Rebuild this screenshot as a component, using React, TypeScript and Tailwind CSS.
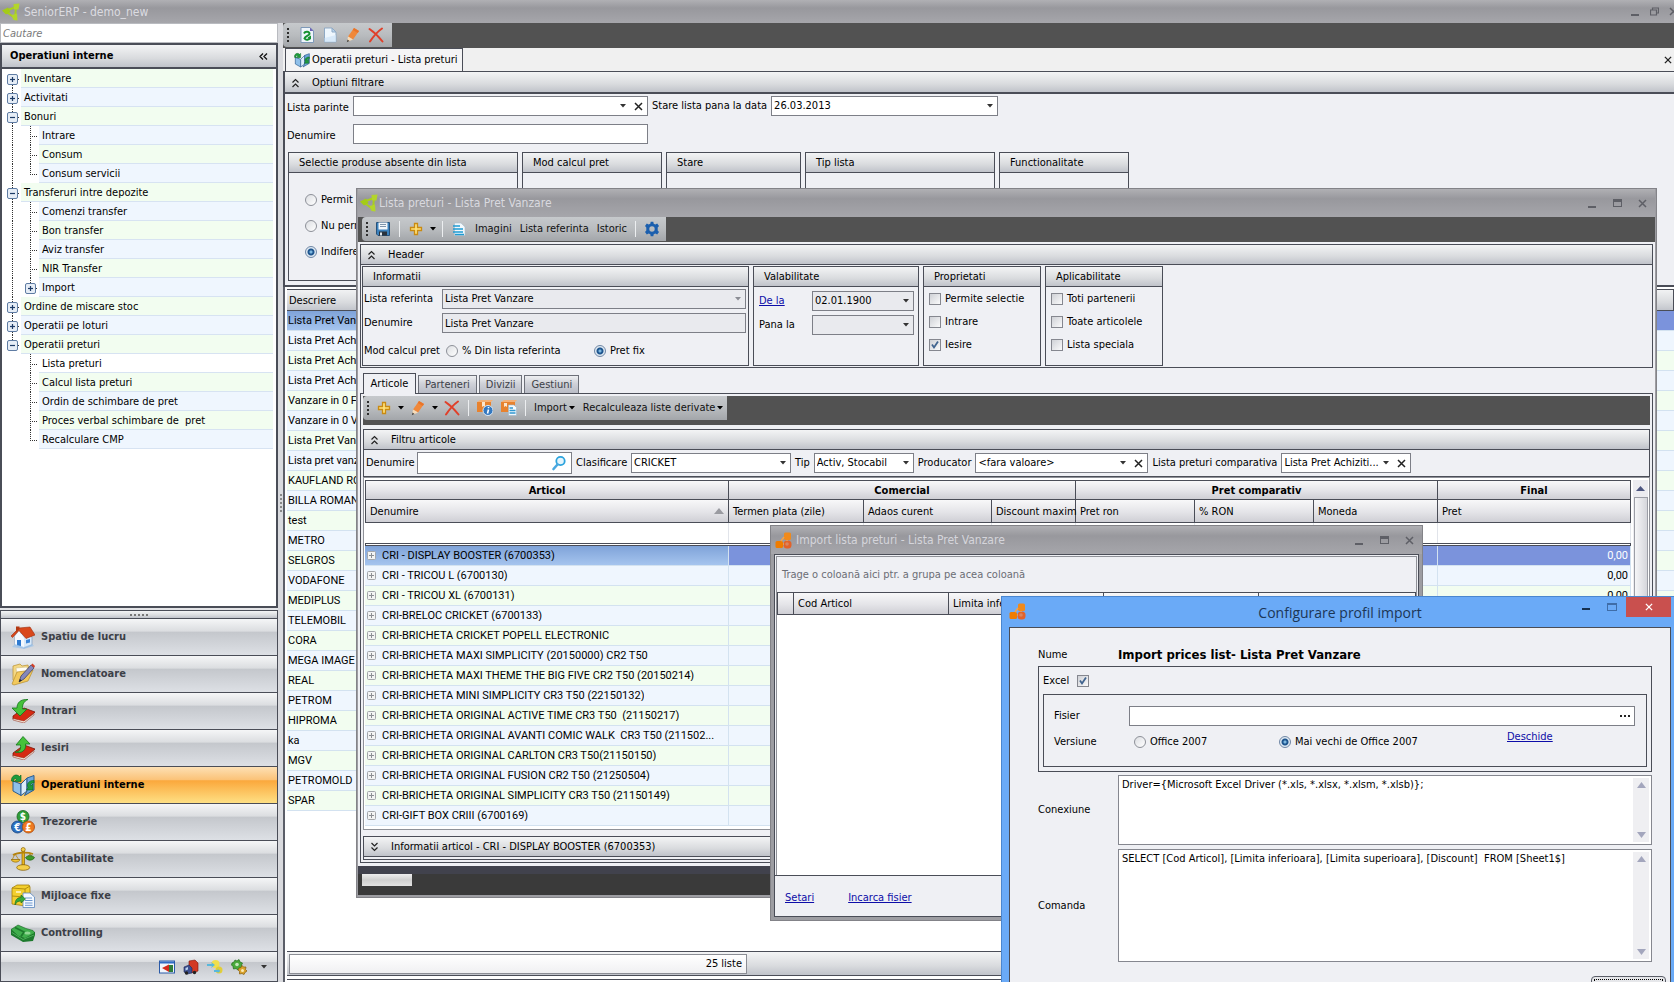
import React, { useId } from "react";

const EDGE = "border-[#4a4d57]";
const BAR = "bg-[linear-gradient(#f3f4f5,#d9dbde_60%,#c0c3ca)]";
const TOOL = "bg-[linear-gradient(#c6c9cc,#b9bcbf_50%,#a3a6aa)]";
const TITLE = "bg-[linear-gradient(#b0b0b4,#98989d_35%,#a6a6ab)]";

/* ---------- icons ---------- */

type P = { className?: string };

const Svg = ({ s = 16, children, className = "" }: { s?: number; children: React.ReactNode; className?: string }) => (
  <svg width={s} height={s} viewBox={`0 0 ${s} ${s}`} className={`shrink-0 ${className}`} aria-hidden="true">
    {children}
  </svg>
);

const SeniorLogo = () => (
  <svg width="18" height="18" viewBox="0 0 18 18" className="shrink-0" aria-hidden="true">
    <path d="M3 8 14 4M14 4 13 15M3 8 13 15" stroke="#a9cf1e" strokeWidth="2" fill="none" />
    <path d="M0 7.500 6 4.500 8.500 9 4 11.500Z" fill="#a4cc17" />
    <path d="M11.500 1 17.500 .5 16.500 6.500 12 6.500Z" fill="#b3d52a" />
    <path d="M9.500 12 15 10.500 15.500 17.500 11.500 17Z" fill="#b3d52a" />
  </svg>
);

const CubesLogo = () => (
  <svg width="17" height="17" viewBox="0 0 17 17" className="shrink-0" aria-hidden="true">
    <rect x="0.500" y="9" width="7.500" height="7" rx="1.500" fill="#ef7c00" />
    <rect x="9" y="0.500" width="7" height="7.500" rx="1.500" fill="#f08a1c" />
    <rect x="8.500" y="8.500" width="8" height="8" rx="3.500" fill="#e2622a" />
    <path d="M9 5 6 9M12 8V9M8 12H9" stroke="#f2a24d" strokeWidth="1.500" />
    <circle cx="12" cy="12" r="1.800" fill="#d98660" />
  </svg>
);

const RefreshDoc = () => (
  <Svg>
    <path d="M2 .5H11L14.500 4V15.500H2Z" fill="#eef5fb" stroke="#7e99b8" />
    <path d="M11 .5V4H14.500Z" fill="#6b62b5" />
    <path d="M5 6.500C6 4.200 10.500 4.200 10.500 7 10.500 8.500 6 9 5.500 11.500 7 13.500 10 13 11 11" stroke="#149130" strokeWidth="2" fill="none" />
    <path d="M12 8.500V12.500L8.500 10.500Z" fill="#149130" />
  </Svg>
);
const NewDoc = () => (
  <Svg>
    <path d="M2.500 1H10L14 5V15H2.500Z" fill="#eef6fd" stroke="#8fa9c4" />
    <path d="M10 1V5H14Z" fill="#b9d5ef" stroke="#8fa9c4" />
    <path d="M2.500 15V11L14 8V15Z" fill="#cfe4f7" opacity=".7" />
  </Svg>
);
const Pencil = () => (
  <Svg>
    <path d="M9 1 14 4 8 12.500 3 9.500Z" fill="#f0883a" />
    <path d="M9 1 14 4 12.800 6 7.800 3Z" fill="#e9742a" />
    <path d="M3 9.500 8 12.500 2 15Z" fill="#f8dcb8" />
    <path d="M2.500 12.500 4.500 14 1.800 15.200Z" fill="#444" />
  </Svg>
);
const RedX = () => (
  <Svg>
    <path d="M1.500 2C6 5 11 10 14.500 14.500M14 1.500C9 5 5 10 2 14.500" stroke="#e0402a" strokeWidth="2" fill="none" strokeLinecap="round" />
  </Svg>
);
const Save = () => (
  <Svg>
    <path d="M1.500 1.500H14.500V14.500H3L1.500 13Z" fill="#3c82bd" stroke="#28527a" />
    <rect x="3.500" y="1.500" width="9" height="7" fill="#f4f8fb" />
    <path d="M5 3.500H11M5 5.500H11" stroke="#7f95ab" />
    <rect x="4" y="10.500" width="8" height="4" fill="#2a333d" />
    <rect x="5" y="11.500" width="2" height="3" fill="#dfe7ee" />
  </Svg>
);
const Plus = () => (
  <Svg>
    <path d="M6.500 2.500H9.500V6.500H13.500V9.500H9.500V13.500H6.500V9.500H2.500V6.500H6.500Z" fill="#ffe27a" stroke="#c98a12" strokeWidth="1.300" />
  </Svg>
);
const LinesDoc = () => (
  <Svg>
    <path d="M3.500 2H10L14 6V14.500H3.500Z" fill="#f2f8fc" stroke="#a9bccb" strokeWidth=".6" />
    <path d="M2 5H9M2 8H12M2 11H12M4 13.500H13" stroke="#1f9bd2" strokeWidth="1.600" />
  </Svg>
);
const Gear = () => (
  <Svg>
    <path
      fillRule="evenodd"
      fill="#1b5fae"
      d="M6.700.8H9.300L9.700 2.800 11.300 3.500 13.200 2.600 15 4.900 13.700 6.400V8 9.600L15 11.100 13.200 13.400 11.300 12.500 9.700 13.200 9.300 15.200H6.700L6.300 13.200 4.700 12.500 2.800 13.400 1 11.100 2.300 9.600V6.400L1 4.900 2.800 2.600 4.700 3.500 6.300 2.800ZM8 5.300A2.700 2.700 0 1 0 8 10.700 2.700 2.700 0 1 0 8 5.300Z"
    />
  </Svg>
);
const Magnifier = () => (
  <Svg>
    <circle cx="9.500" cy="6" r="4.200" fill="#e4f4fc" stroke="#2ba3dd" strokeWidth="1.800" />
    <path d="M6.500 9.500 2.500 14" stroke="#4aa8e0" strokeWidth="2.600" strokeLinecap="round" />
  </Svg>
);
const BoxInfo = () => (
  <Svg>
    <path d="M0 2H14V12H0Z" fill="#e8822e" />
    <path d="M0 2 3 0H16L14 2Z" fill="#f3b178" />
    <path d="M5 2H8V7L6.500 6 5 7Z" fill="#fbe6cf" />
    <circle cx="11" cy="10.500" r="5" fill="#3478c0" stroke="#dce9f5" />
    <path d="M11.500 7V8.300M11.500 9.500 10.500 13.500" stroke="#fff" strokeWidth="1.600" />
  </Svg>
);
const BoxDoc = () => (
  <Svg>
    <path d="M0 2H14V12H0Z" fill="#e8822e" />
    <path d="M0 2 3 0H16L14 2Z" fill="#f3b178" />
    <path d="M3 3H6V7L4.500 6 3 7Z" fill="#fbe6cf" />
    <path d="M7.500 5H13L15.500 7.500V15.500H7.500Z" fill="#f4f9fd" stroke="#9bb3c8" strokeWidth=".6" />
    <path d="M8.500 8H12M8.500 10.500H14.500M8.500 13H14.500" stroke="#2f97d0" strokeWidth="1.300" />
  </Svg>
);

const MapIcon = ({ s = 24 }: { s?: number }) => (
  <svg width={s} height={s} viewBox="0 0 24 24" className="shrink-0" aria-hidden="true">
    <path d="M2 8 10 11V22.500L2 18Z" fill="#8fc0ea" stroke="#2c5d8f" />
    <path d="M10 11 16 5V18L10 22.500Z" fill="#dcecfa" stroke="#2c5d8f" />
    <path d="M16 5 23 2.500V17L13.500 22.500 16 18Z" fill="#6fa7dc" stroke="#2c5d8f" />
    <path d="M.5 8C0 3 5 0 8.500 3.500L10 2V8.500H3.500L5.500 6.500C4 5 2.500 6 3 8.500Z" fill="#1f9b3b" stroke="#0c6323" strokeWidth=".6" />
    <path d="M23 7.500C18.500 7 15 11 17 14.500L15.500 17H22V11L19.800 13C19 11.500 20.500 9.500 23 10Z" fill="#1f9b3b" stroke="#0c6323" strokeWidth=".6" />
  </svg>
);
const House = () => (
  <Svg s={24}>
    <path d="M4 11 13 7 21 12V20L13 23 4 20Z" fill="#d7e8f8" stroke="#7d9cc0" strokeWidth=".7" />
    <path d="M4 11 8 6 13 13V23L4 20Z" fill="#f4f9fe" />
    <path d="M6 15H10V21.500L6 20.500Z" fill="#2e7ad0" />
    <path d="M15 15 19 14V17.500L15 18.500Z" fill="#3d86d8" />
    <path d="M0 11 8 3 19 2 24 10 15 13.500 8 5.500 1.500 12.500Z" fill="#d9481c" stroke="#9c2d0d" strokeWidth=".6" />
    <path d="M5 1.500H8.500V4L5 7Z" fill="#b23812" />
    <path d="M1 22 4 19 13 22 21 19 23 21 13 24Z" fill="#9ac2ea" opacity=".7" />
  </Svg>
);
const FolderPen = () => (
  <Svg s={24}>
    <path d="M2 4 9 2 11 4 17 3 18 8 6 21 2 18Z" fill="#f4d884" stroke="#b98f2c" strokeWidth=".7" />
    <path d="M5 6 16 5 17 12 7 19Z" fill="#fffdf5" stroke="#c8b67e" strokeWidth=".5" />
    <path d="M1 22 6 10 22 8 17 19 3 23Z" fill="#f2c95c" stroke="#b98f2c" strokeWidth=".7" />
    <path d="M8 20 10 14 20 3 23 6 13 17Z" fill="#8488bb" stroke="#33365f" strokeWidth=".7" />
    <path d="M20 3 21.500 1.500 24 4 23 6Z" fill="#d33f25" />
    <path d="M8 20 8.800 17 11 18.500Z" fill="#222" />
  </Svg>
);
const BookIn = () => (
  <Svg s={24}>
    <path d="M2 17 13 9 24 13 13 23 2 20Z" fill="#d62a12" stroke="#7c1408" strokeWidth=".8" />
    <path d="M2 19.500 13 22 23 14.500V16L13 24 2 21Z" fill="#f5e9dd" stroke="#8c2415" strokeWidth=".5" />
    <path d="M17 .5C9 0 6 4 6 9H1L9 17 16 10H11.500C11 6 13 2 17 .5Z" fill="#46c23a" stroke="#13761a" strokeWidth=".8" />
  </Svg>
);
const BookOut = () => (
  <Svg s={24}>
    <path d="M2 17 13 9 24 13 13 23 2 20Z" fill="#d62a12" stroke="#7c1408" strokeWidth=".8" />
    <path d="M2 19.500 13 22 23 14.500V16L13 24 2 21Z" fill="#f5e9dd" stroke="#8c2415" strokeWidth=".5" />
    <path d="M4 16C9 16 10 13 9.500 9H5L12 .5 19 8H14.500C15.500 14 11 18 4 16Z" fill="#46c23a" stroke="#13761a" strokeWidth=".8" />
  </Svg>
);
const Coin = ({ x, y, c, d, children }: { x: number; y: number; c: string; d: string; children: string }) => (
  <g>
    <circle cx={x} cy={y} r="6" fill={c} stroke={d} strokeWidth=".8" />
    <text x={x} y={y + 3.5} textAnchor="middle" fontSize="10" fontWeight="bold" fill="#fff">
      {children}
    </text>
  </g>
);
const Coins = () => (
  <Svg s={24}>
    <Coin x={12} y={6.5} c="#2f9d38" d="#166320">$</Coin>
    <Coin x={6.5} y={17} c="#2c6fc0" d="#14417c">€</Coin>
    <Coin x={17.5} y={17} c="#ee7a22" d="#a94a0a">£</Coin>
  </Svg>
);
const Scales = () => (
  <Svg s={24}>
    <path d="M11 3H13.500V18H11Z" fill="#e8b51d" stroke="#8d6507" strokeWidth=".7" />
    <circle cx="12.200" cy="2.500" r="2" fill="#f4cf4a" stroke="#8d6507" strokeWidth=".7" />
    <path d="M2 8C7 5 17 5 22 7" stroke="#b5830d" strokeWidth="1.800" fill="none" />
    <path d="M4 7 1 13H8ZM19 7 15.500 11H22.500Z" fill="none" stroke="#b5830d" strokeWidth=".8" />
    <path d="M0 12.500H9C8 16 1.500 16 0 12.500Z" fill="#f0c232" stroke="#8d6507" strokeWidth=".7" />
    <path d="M14.500 10.500C17 8 21 8 23.500 10.500 22 14 16 14 14.500 10.500Z" fill="#3f9a2b" stroke="#1e6310" strokeWidth=".7" />
    <ellipse cx="12.200" cy="20.500" rx="6.500" ry="2.800" fill="#f4cf4a" stroke="#8d6507" strokeWidth=".8" />
  </Svg>
);
const Cabinet = () => (
  <Svg s={24}>
    <path d="M1 4 6 1H18L19 3V19L15 22 1 20Z" fill="#f3cf2e" stroke="#a37f07" strokeWidth=".8" />
    <path d="M1 4 14 5 19 2M14 5V21M1 12 14 13" stroke="#a37f07" strokeWidth=".8" fill="none" />
    <path d="M5 8H10M5 16H9" stroke="#fff8cf" strokeWidth="1.500" />
    <path d="M12 9H19L23.500 13V23.500H12Z" fill="#f4f9ff" stroke="#5a86bd" strokeWidth=".8" />
    <path d="M14 14H21M14 16.500H21.500M14 19H21.500M14 21.300H21.500" stroke="#6b97cf" />
    <path d="M4 21C4 15 7 13.500 10 13.500V11L14.500 15 10 19V17C7 17 5.500 18 4 21Z" fill="#36a83a" stroke="#136a1a" strokeWidth=".6" />
  </Svg>
);
const Cash = () => (
  <Svg s={24}>
    <path d="M0 8.500V14L12 21 22 20 24 14V11Z" fill="#1d7a2d" />
    <path d="M0 8.500 7 4 15 7.500 22 9.500 24 12 14 17.500 7 15Z" fill="#3fae4c" stroke="#176424" strokeWidth=".6" />
    <path d="M4 6.500 13 11 10 15.500" stroke="#1d7a2d" strokeWidth="1.800" fill="none" />
    <ellipse cx="16.500" cy="12" rx="3" ry="1.600" fill="#8fd793" />
    <path d="M1 11.500 12 18.500 23 14" stroke="#57bd62" strokeWidth=".8" fill="none" />
  </Svg>
);

const MiniWindow = () => (
  <Svg>
    <rect x=".5" y="2" width="15" height="12" fill="#f1f5fb" stroke="#2a5aa8" />
    <rect x="1" y="2.500" width="14" height="2" fill="#2f6bc4" />
    <path d="M3 9 10 5.500V13Z" fill="#d42a1b" />
    <rect x="10" y="6" width="4" height="7" fill="#2f7c3a" />
  </Svg>
);
const MiniTruck = () => (
  <Svg>
    <path d="M6 2 12 1 15 4V12L10 14 6 11Z" fill="#d23a24" stroke="#7d160b" strokeWidth=".6" />
    <path d="M1 8 6 6 9 9V14L4 15 1 13Z" fill="#3d4f8f" stroke="#1d2750" strokeWidth=".6" />
    <circle cx="3.500" cy="14" r="1.700" fill="#222" />
    <circle cx="11.500" cy="13.500" r="1.700" fill="#222" />
    <path d="M2.500 9 5 8V10.500L2.500 11.500Z" fill="#bcd3f0" />
  </Svg>
);
const MiniCubes = () => (
  <Svg>
    <circle cx="8.500" cy="5" r="4" fill="#f0df4e" />
    <circle cx="12" cy="11" r="3.500" fill="#e3cf37" />
    <path d="M0 5H5L4 3 8 6 4 9 5 7H0Z" fill="#58b8dc" />
    <path d="M7 11H11L10 9.500 13.500 12 10 14.500 11 13H7Z" fill="#58b8dc" />
  </Svg>
);
const MiniGears = () => (
  <Svg>
    <path d="M1 4 3 3 4 1 6 2 8 .5 9 3 11.500 4 10.500 6 11 8.500 8.500 9 7 11 5 9.500 2.500 10 2 7.500 .5 6Z" fill="#49a93b" stroke="#1f6d18" strokeWidth=".7" />
    <circle cx="6" cy="5.500" r="1.800" fill="#c4e6bd" />
    <path d="M8 9 10 8.500 11 6.500 12.500 8 15 8 14.500 10.500 16 12 14 13.500 13 15.500 11 14.500 8.500 15 8.500 12.500 7 11Z" fill="#d9a22c" stroke="#855b0b" strokeWidth=".7" />
    <circle cx="11.500" cy="11.500" r="1.500" fill="#fbe9b5" />
  </Svg>
);

const Caret = ({ className = "text-[#333]" }: P) => (
  <svg width="6" height="4" viewBox="0 0 6 4" className={`pointer-events-none shrink-0 ${className}`} aria-hidden="true">
    <path d="M0 0H6L3 3.500Z" fill="currentColor" />
  </svg>
);
const Cross = ({ className = "", s = 9 }: P & { s?: number }) => (
  <svg width={s} height={s} viewBox="0 0 9 9" className={className} aria-hidden="true">
    <path d="M1 1 8 8M8 1 1 8" stroke="currentColor" strokeWidth="1.500" />
  </svg>
);
const Chevrons = ({ down = false }: { down?: boolean }) => (
  <svg width="9" height="10" viewBox="0 0 9 10" className="shrink-0" aria-hidden="true">
    <path
      d={down ? "M1.500 1 4.500 4 7.500 1M1.500 5.500 4.500 8.500 7.500 5.500" : "M1.500 4.500 4.500 1.500 7.500 4.500M1.500 9 4.500 6 7.500 9"}
      fill="none"
      stroke="#222"
      strokeWidth="1.200"
    />
  </svg>
);
const Grip = () => (
  <svg width="3" height="16" viewBox="0 0 3 16" className="ml-1 shrink-0" aria-hidden="true">
    <path d="M1 1V16" stroke="#2d2d2d" strokeWidth="2" strokeDasharray="2 2" />
  </svg>
);
const Divider = () => <span className="mx-0.5 h-4 w-px shrink-0 bg-[#eceef0]" />;

/* ---------- controls ---------- */

const IconButton = ({ label, children }: { label: string; children: React.ReactNode }) => (
  <button aria-label={label} className="grid size-5 shrink-0 place-items-center">
    {children}
  </button>
);

function Combo({
  id,
  label,
  value = "",
  clearable = false,
  disabled = false,
  dim = false,
  className = "",
}: {
  id?: string;
  label?: string;
  value?: string;
  clearable?: boolean;
  disabled?: boolean;
  dim?: boolean;
  className?: string;
}) {
  return (
    <div className={`flex h-5 items-center border border-[#7d7f87] pr-1 ${disabled ? "bg-[#e9eaee]" : "bg-white"} ${className}`}>
      <select id={id} aria-label={label} className="h-full min-w-0 flex-1 appearance-none truncate bg-transparent pl-0.5 outline-none">
        <option>{value}</option>
      </select>
      <Caret className={dim ? "text-[#8b8d94]" : "text-[#333]"} />
      {clearable && (
        <button aria-label="Sterge" className="ml-2 text-[#222]">
          <Cross />
        </button>
      )}
    </div>
  );
}

function Check({ label, checked = false, reverse = false }: { label: string; checked?: boolean; reverse?: boolean }) {
  return (
    <label className={`flex items-center ${reverse ? "flex-row-reverse justify-end gap-2" : "gap-1"}`}>
      <span className="grid size-3 shrink-0">
        <input
          type="checkbox"
          defaultChecked={checked}
          className="peer col-start-1 row-start-1 size-3 appearance-none border border-[#85878f] bg-[linear-gradient(135deg,#cfd1d6,#fafafb)]"
        />
        <svg viewBox="0 0 12 12" className="pointer-events-none invisible col-start-1 row-start-1 size-3 peer-checked:visible" aria-hidden="true">
          <path d="M3 5.500 5 8.500 9 2.500" fill="none" stroke="#41648f" strokeWidth="1.800" />
        </svg>
      </span>
      {label}
    </label>
  );
}

function Radio({ name, label, checked = false, className = "" }: { name: string; label: string; checked?: boolean; className?: string }) {
  return (
    <label className={`flex items-center gap-1 whitespace-nowrap ${className}`}>
      <input
        type="radio"
        name={name}
        defaultChecked={checked}
        className="size-3 shrink-0 appearance-none rounded-full border border-[#8d9098] bg-[linear-gradient(135deg,#dcdee2,#ffffff)] checked:border-[#6f87a5] checked:bg-[radial-gradient(circle_at_50%_50%,#7db8e0_0_1px,#1f568f_2px_3px,#dfe9f2_4px)]"
      />
      {label}
    </label>
  );
}

function GroupBox({ title, className = "", children }: { title: string; className?: string; children?: React.ReactNode }) {
  return (
    <section className={`flex flex-col border ${EDGE} ${className}`}>
      <h3 className={`flex h-5 shrink-0 items-center border-b pl-2.5 whitespace-nowrap ${EDGE} ${BAR}`}>{title}</h3>
      {children}
    </section>
  );
}

function Fold({ title, down = false, className = "" }: { title: string; down?: boolean; className?: string }) {
  return (
    <h2 className={`${EDGE} ${BAR} ${className}`}>
      <button aria-expanded={!down} className="flex h-full w-full items-center gap-3 pl-1.5 text-left">
        <Chevrons down={down} />
        {title}
      </button>
    </h2>
  );
}

function WindowButtons() {
  return (
    <div className="flex shrink-0 gap-4 text-[#5e5f66]">
      <button aria-label="Minimizare" className="grid size-[9px] items-end">
        <span className="h-0.5 w-2 bg-current" />
      </button>
      <button aria-label="Maximizare" className="h-2 w-[9px] border border-t-[3px] border-current" />
      <button aria-label="Inchidere">
        <Cross />
      </button>
    </div>
  );
}

/* ---------- side bar ---------- */

type Node = { t: string; lvl: 0 | 1; box?: "+" | "-"; last?: boolean };

const tree: Node[] = [
  { t: "Inventare", lvl: 0, box: "+" },
  { t: "Activitati", lvl: 0, box: "+" },
  { t: "Bonuri", lvl: 0, box: "-" },
  { t: "Intrare", lvl: 1 },
  { t: "Consum", lvl: 1 },
  { t: "Consum servicii", lvl: 1, last: true },
  { t: "Transferuri intre depozite", lvl: 0, box: "-" },
  { t: "Comenzi transfer", lvl: 1 },
  { t: "Bon transfer", lvl: 1 },
  { t: "Aviz transfer", lvl: 1 },
  { t: "NIR Transfer", lvl: 1 },
  { t: "Import", lvl: 1, box: "+", last: true },
  { t: "Ordine de miscare stoc", lvl: 0, box: "+" },
  { t: "Operatii pe loturi", lvl: 0, box: "+" },
  { t: "Operatii preturi", lvl: 0, box: "-" },
  { t: "Lista preturi", lvl: 1 },
  { t: "Calcul lista preturi", lvl: 1 },
  { t: "Ordin de schimbare de pret", lvl: 1 },
  { t: "Proces verbal schimbare de  pret", lvl: 1 },
  { t: "Recalculare CMP", lvl: 1, last: true },
];

function Branch({ node, first, trunk, trunkEnd }: { node: Node; first: boolean; trunk: boolean; trunkEnd: boolean }) {
  const w = node.lvl ? 37 : 19;
  const x = node.lvl ? 28 : 10;
  return (
    <svg width={w} height="19" viewBox={`0 0 ${w} 19`} className="shrink-0" aria-hidden="true">
      <g stroke="#333" strokeDasharray="1 1">
        {trunk && <path d={`M10.500 ${first ? 10 : 0}V${trunkEnd ? 10 : 19}`} />}
        {node.lvl === 1 && <path d={`M28.500 0V${node.last ? 10 : 19}`} />}
        <path d={`M${x} 10.500H${w - 1}`} />
      </g>
      {node.box && (
        <g>
          <rect x={x - 4.5} y="5.500" width="10" height="10" rx="1.500" fill="#e6edf6" stroke="#5f7ca3" />
          <path d={`M${x - 2} 10.500H${x + 3}`} stroke="#1d3b66" strokeWidth="1.200" />
          {node.box === "+" && <path d={`M${x + 0.5} 8V13`} stroke="#1d3b66" strokeWidth="1.200" />}
        </g>
      )}
    </svg>
  );
}

const modules: { t: string; icon: React.ReactNode; on?: boolean }[] = [
  { t: "Spatiu de lucru", icon: <House /> },
  { t: "Nomenclatoare", icon: <FolderPen /> },
  { t: "Intrari", icon: <BookIn /> },
  { t: "Iesiri", icon: <BookOut /> },
  { t: "Operatiuni interne", icon: <MapIcon />, on: true },
  { t: "Trezorerie", icon: <Coins /> },
  { t: "Contabilitate", icon: <Scales /> },
  { t: "Mijloace fixe", icon: <Cabinet /> },
  { t: "Controlling", icon: <Cash /> },
];

function Sidebar() {
  return (
    <aside className="flex w-[278px] shrink-0 flex-col bg-[#e3e4e7]">
      <input aria-label="Cautare" placeholder="Cautare" className="h-5 shrink-0 border border-[#b9bbc0] bg-white px-0.5 italic outline-none placeholder:text-[#7a7a7a]" />
      <div className={`flex h-[25px] shrink-0 items-center justify-between border-2 border-b px-2 font-bold ${EDGE} ${BAR}`}>
        Operatiuni interne
        <button aria-label="Restrange">
          <svg width="9" height="7" viewBox="0 0 9 7" aria-hidden="true">
            <path d="M4 .5 1 3.500 4 6.500M8 .5 5 3.500 8 6.500" fill="none" stroke="#111" strokeWidth="1.300" />
          </svg>
        </button>
      </div>
      <ul className={`min-h-0 flex-1 overflow-hidden border-2 border-t bg-white ${EDGE}`}>
        {tree.map((n, i) => (
          <li key={n.t + i} className="flex h-[19px] pr-[3px]">
            <Branch node={n} first={i === 0} trunk={i < 15} trunkEnd={i === 14} />
            <a
              href="#"
              className={`flex flex-1 items-center border-b border-[#d7e3f2] pt-0.5 pl-[3px] whitespace-pre ${
                i === 15 ? "bg-white" : i % 2 ? "bg-[#eff6fe]" : "bg-[#f2fdf0]"
              }`}
            >
              {n.t}
            </a>
          </li>
        ))}
      </ul>
      <div className={`mt-0.5 grid h-2 shrink-0 place-items-center border-x border-t ${EDGE} ${BAR}`}>
        <span className="w-[18px] border-t-2 border-dotted border-[#777]" />
      </div>
      <nav className="flex shrink-0 flex-col">
        {modules.map((m) => (
          <button
            key={m.t}
            className={`flex h-[37px] items-center gap-1.5 border border-b-0 pl-2.5 font-bold ${EDGE} ${
              m.on
                ? "bg-[linear-gradient(#fde0b4,#fbc277_36%,#fba83c_38%,#fee084)] text-black"
                : "bg-[linear-gradient(#f5f6f7,#dbdde0_34%,#c4c7cc_36%,#dde0e5)] text-[#3c3f47]"
            }`}
          >
            {m.icon}
            {m.t}
          </button>
        ))}
        <div className={`flex h-[31px] items-center justify-end gap-1 border pr-2.5 ${EDGE} bg-[linear-gradient(#f5f6f7,#dbdde0_34%,#c4c7cc_36%,#dde0e5)]`}>
          <IconButton label="Ferestre"><MiniWindow /></IconButton>
          <IconButton label="Transport"><MiniTruck /></IconButton>
          <IconButton label="Productie"><MiniCubes /></IconButton>
          <IconButton label="Setari"><MiniGears /></IconButton>
          <button aria-label="Mai multe" className="ml-2"><Caret /></button>
        </div>
      </nav>
    </aside>
  );
}

/* ---------- price list page ---------- */

const lists = [
  "Lista Pret Vanzare", "Lista Pret Achizitie", "Lista Pret Achizitie 2", "Lista Pret Achizitie 3", "Vanzare in 0 Franciza", "Vanzare in 0 Vrac",
  "Lista Pret Vanzare 2", "Lista pret vanzare", "KAUFLAND ROMANIA", "BILLA ROMANIA", "test", "METRO", "SELGROS", "VODAFONE",
  "MEDIPLUS", "TELEMOBIL", "CORA", "MEGA IMAGE", "REAL", "PETROM", "HIPROMA", "ka", "MGV", "PETROMOLD", "SPAR",
];

const ROW = "font-[Roboto,'Liberation_Sans',sans-serif]";

function PricePage() {
  const parent = useId();
  const date = useId();
  const name = useId();
  return (
    <main className="flex min-w-0 flex-1 flex-col bg-[#eff0f4]">
      <div className="flex h-[25px] shrink-0 items-start bg-[#525252]">
        <div className={`flex h-6 items-center gap-[3px] rounded-l pr-1.5 ${TOOL}`}>
          <Grip />
          <span className="w-px" />
          <IconButton label="Reincarca"><RefreshDoc /></IconButton>
          <IconButton label="Nou"><NewDoc /></IconButton>
          <IconButton label="Editeaza"><Pencil /></IconButton>
          <IconButton label="Sterge"><RedX /></IconButton>
        </div>
      </div>
      <div className="flex h-[23px] shrink-0 items-stretch justify-between bg-[#f0f0f0] px-0.5">
        <button className={`flex items-center gap-0.5 border border-b-0 bg-[#f4f4f5] pr-1 pl-2 ${EDGE}`}>
          <MapIcon s={16} />
          Operatii preturi - Lista preturi
        </button>
        <button aria-label="Inchide fila" className="text-[#222]"><Cross s={8} /></button>
      </div>
      <section className={`flex h-[216px] shrink-0 flex-col border-t border-b-2 border-l-2 ${EDGE}`}>
        <Fold title="Optiuni filtrare" className="h-[22px] border-b-2 pt-px" />
        <div className="flex items-center gap-1 pt-0.5 pl-0.5">
          <label htmlFor={parent} className="w-[62px] pt-1 whitespace-nowrap">Lista parinte</label>
          <Combo id={parent} clearable className="w-[295px]" />
          <label htmlFor={date}>Stare lista pana la data</label>
          <Combo id={date} value="26.03.2013" className="w-[227px]" />
        </div>
        <div className="flex items-center gap-1 pt-2 pl-0.5">
          <label htmlFor={name} className="w-[62px] pt-1">Denumire</label>
          <input id={name} className="h-5 w-[295px] border border-[#7d7f87] bg-white px-1 outline-none" />
        </div>
        <div className="mb-1 flex flex-1 gap-1 pt-2 pl-[3px]">
          <GroupBox title="Selectie produse absente din lista" className="w-[230px]">
            <div className="flex flex-col gap-3 pt-5 pl-4 leading-[14px]">
              <Radio name="absente" label="Permit" />
              <Radio name="absente" label="Nu permit" />
              <Radio name="absente" label="Indiferent" checked />
            </div>
          </GroupBox>
          <GroupBox title="Mod calcul pret" className="w-[140px]" />
          <GroupBox title="Stare" className="w-[135px]" />
          <GroupBox title="Tip lista" className="w-[190px]" />
          <GroupBox title="Functionalitate" className="w-[130px]" />
        </div>
      </section>
      <div className="flex min-h-0 flex-1 flex-col border-l-2 border-[#5b5e68] bg-white pt-0.5 pl-0.5">
        <div className="min-h-0 flex-1 overflow-hidden">
          <table className="w-full table-fixed border-separate border-spacing-0">
            <colgroup>
              <col className="w-[640px]" />
              <col />
            </colgroup>
            <thead>
              <tr className={`h-[22px] ${BAR}`}>
                <th className={`border-y border-r p-0 pt-0.5 pl-0.5 text-left font-normal ${EDGE}`}>Descriere</th>
                <th className={`border-y border-r p-0 ${EDGE}`} />
              </tr>
            </thead>
            <tbody>
              {lists.map((t, i) => (
                <tr key={t} className={`h-5 ${i === 0 ? "" : i % 2 ? "bg-[#eff6fe]" : "bg-[#f2fdf0]"}`}>
                  <td className={`border-b border-[#d3e2f0] p-0 pl-px leading-none ${ROW} ${i === 0 ? "bg-[linear-gradient(#7fa3d9,#a5c4ee)]" : ""}`}>{t}</td>
                  <td className={`border-b border-[#d3e2f0] p-0 ${i === 0 ? "bg-[#7b93dc]" : ""}`} />
                </tr>
              ))}
            </tbody>
          </table>
        </div>
        <div className={`mb-[3px] flex h-[25px] shrink-0 items-center border-y px-0.5 ${EDGE} ${BAR}`}>
          <div className="h-5 w-[458px] border border-[#8b8d94] bg-[linear-gradient(#ffffff,#f0f0f2)] pr-1 text-right leading-[18px]">25 liste</div>
        </div>
        <div className={`mb-0.5 border-t ${EDGE}`} />
      </div>
    </main>
  );
}

/* ---------- price list window ---------- */

const articles = [
  "CRI - DISPLAY BOOSTER (6700353)",
  "CRI - TRICOU L (6700130)",
  "CRI - TRICOU XL (6700131)",
  "CRI-BRELOC CRICKET (6700133)",
  "CRI-BRICHETA CRICKET POPELL ELECTRONIC",
  "CRI-BRICHETA MAXI SIMPLICITY (20150000) CR2 T50",
  "CRI-BRICHETA MAXI THEME THE BIG FIVE CR2 T50 (20150214)",
  "CRI-BRICHETA MINI SIMPLICITY CR3 T50 (22150132)",
  "CRI-BRICHETA ORIGINAL ACTIVE TIME CR3 T50  (21150217)",
  "CRI-BRICHETA ORIGINAL AVANTI COMIC WALK  CR3 T50 (211502...",
  "CRI-BRICHETA ORIGINAL CARLTON CR3 T50(21150150)",
  "CRI-BRICHETA ORIGINAL FUSION CR2 T50 (21250504)",
  "CRI-BRICHETA ORIGINAL SIMPLICITY CR3 T50 (21150149)",
  "CRI-GIFT BOX CRIII (6700169)",
];
const columns = ["Denumire", "Termen plata (zile)", "Adaos curent", "Discount maxim", "Pret ron", "% RON", "Moneda", "Pret"];
const HEAD = "bg-[linear-gradient(#f8f8f9,#e4e4e8_55%,#cfcfd5)]";

function ArticleGrid() {
  return (
    <div className="flex border border-[#8f9198] bg-white p-px pt-0.5 pb-[3px]">
      <div className="min-w-0 flex-1">
        <table className="w-full table-fixed border-separate border-spacing-0">
          <colgroup>
            <col className="w-[364px]" />
            <col className="w-[135px]" />
            <col className="w-[128px]" />
            <col className="w-[84px]" />
            <col className="w-[119px]" />
            <col className="w-[119px]" />
            <col className="w-[124px]" />
            <col />
          </colgroup>
          <thead>
            <tr className="h-[19px]">
              {([["Articol", 1], ["Comercial", 3], ["Pret comparativ", 3], ["Final", 1]] as [string, number][]).map(([t, n]) => (
                <th key={t} colSpan={n} className={`border-t border-r p-0 leading-none font-bold first:border-l ${EDGE} ${HEAD}`}>{t}</th>
              ))}
            </tr>
            <tr className="h-6">
              {columns.map((t, i) => (
                <th key={t} className={`border-y border-r p-0 pl-1 text-left leading-none font-normal whitespace-nowrap first:border-l ${EDGE} ${HEAD}`}>
                  {i === 0 ? (
                    <span className="flex items-center justify-between pr-1">
                      {t}
                      <svg width="10" height="6" viewBox="0 0 10 6" aria-hidden="true"><path d="M0 6H10L5 0Z" fill="#9a9ba1" /></svg>
                    </span>
                  ) : t}
                </th>
              ))}
            </tr>
          </thead>
          <tbody>
            <tr className="h-5">
              {columns.map((c) => <td key={c} className="border-r border-[#e1e4ea] p-0" />)}
            </tr>
            <tr className="h-[3px]">
              <td colSpan={8} className={`h-[3px] border p-0 ${EDGE}`} />
            </tr>
            {articles.map((a, i) => (
              <tr key={a} className={`h-5 ${i === 0 ? "bg-[#7b93dc] text-white" : i % 2 ? "bg-[#eff6fe]" : "bg-[#f2fdf0]"}`}>
                <td className={`border-r border-b border-[#d3e2f0] p-0 leading-none ${ROW} ${i === 0 ? "bg-[linear-gradient(#7fa3d9,#a5c4ee)] text-black" : ""}`}>
                  <span className="flex items-center gap-1.5 pl-0.5">
                    <svg width="9" height="9" viewBox="0 0 9 9" className="shrink-0" aria-hidden="true">
                      <rect x=".5" y=".5" width="8" height="8" rx="1" fill="#f3f4f4" stroke="#a3a6aa" />
                      <path d="M2 4.500H7M4.500 2V7" stroke="#8c9094" />
                    </svg>
                    <span className="truncate whitespace-pre">{a}</span>
                  </span>
                </td>
                {columns.slice(1).map((c, k) => (
                  <td key={c} className={`border-r border-b border-[#d3e2f0] p-0 pr-0.5 text-right leading-none ${ROW}`}>{k === 6 ? "0,00" : ""}</td>
                ))}
              </tr>
            ))}
          </tbody>
        </table>
      </div>
      <div className="ml-0.5 flex w-[15px] shrink-0 flex-col items-center bg-[#ececf0]">
        <svg width="9" height="17" viewBox="0 0 9 17" aria-hidden="true"><path d="M0 11H9L4.500 6Z" fill="#4d5680" /></svg>
        <div className="h-[260px] w-3.5 border border-[#9c9ea6] bg-[linear-gradient(to_right,#f6f6f8,#d5d6db)]" />
      </div>
    </div>
  );
}

const ToolText = ({ children, caret = false }: { children: string; caret?: boolean }) => (
  <button className="flex items-center gap-0.5 px-0.5 whitespace-nowrap text-[#111]">
    {children}
    {caret && <Caret className="text-black" />}
  </button>
);

function PriceWindow() {
  const f = useId();
  return (
    <section className="absolute top-[188px] right-[17px] left-[356px] border border-[#838388] bg-[#9d9da2] px-px pb-0.5">
      <header className={`flex h-7 items-center gap-px pr-2 pl-0.5 text-xs text-[#d9d9df] ${TITLE}`}>
        <SeniorLogo />
        <h1 className="flex-1">Lista preturi - Lista Pret Vanzare</h1>
        <WindowButtons />
      </header>
      <div className="flex h-[25px] items-start bg-[#525252] pl-1">
        <div className={`flex h-6 items-center gap-1 rounded-l pr-1 ${TOOL}`}>
          <Grip />
          <IconButton label="Salveaza"><Save /></IconButton>
          <Divider />
          <span className="flex items-center gap-1"><IconButton label="Adauga"><Plus /></IconButton><Caret className="text-black" /></span>
          <Divider />
          <IconButton label="Document"><LinesDoc /></IconButton>
          <ToolText>Imagini</ToolText>
          <ToolText>Lista referinta</ToolText>
          <ToolText>Istoric</ToolText>
          <Divider />
          <IconButton label="Optiuni"><Gear /></IconButton>
        </div>
      </div>
      <div className="bg-[#eff0f4] px-0.5 pt-0.5 pb-[3px]">
        <section className={`border ${EDGE}`}>
          <Fold title="Header" className="h-5 border-b" />
          <div className="flex h-[102px] gap-1 p-px">
            <GroupBox title="Informatii" className="w-[387px]">
              <div className="grid grid-cols-[74px_1fr] items-center gap-x-1 gap-y-1 px-px pt-0.5 pr-0.5">
                <label htmlFor={f + "r"}>Lista referinta</label>
                <Combo id={f + "r"} value="Lista Pret Vanzare" disabled dim />
                <label htmlFor={f + "d"}>Denumire</label>
                <input id={f + "d"} readOnly defaultValue="Lista Pret Vanzare" className="h-5 border border-[#7d7f87] bg-[#e9eaee] px-0.5 outline-none" />
              </div>
              <fieldset className="flex items-center pt-2.5 pl-px">
                <legend className="float-left w-[82px] whitespace-nowrap">Mod calcul pret</legend>
                <Radio name="calcul" label="% Din lista referinta" className="w-[148px]" />
                <Radio name="calcul" label="Pret fix" checked />
              </fieldset>
            </GroupBox>
            <GroupBox title="Valabilitate" className="w-[166px]">
              <div className="grid grid-cols-[53px_102px] items-center gap-y-1 pt-1 pl-[5px]">
                <a href="#" className="text-[#0d0da8] underline">De la</a>
                <Combo label="De la" value="02.01.1900" disabled />
                <label htmlFor={f + "p"}>Pana la</label>
                <Combo id={f + "p"} disabled />
              </div>
            </GroupBox>
            <GroupBox title="Proprietati" className="w-[118px]">
              <div className="flex flex-col gap-2 pt-1 pl-[5px] leading-[15px]">
                <Check label="Permite selectie" />
                <Check label="Intrare" />
                <Check label="Iesire" checked />
              </div>
            </GroupBox>
            <GroupBox title="Aplicabilitate" className="w-[118px]">
              <div className="flex flex-col gap-2 pt-1 pl-[5px] leading-[15px]">
                <Check label="Toti partenerii" />
                <Check label="Toate articolele" />
                <Check label="Lista speciala" />
              </div>
            </GroupBox>
          </div>
        </section>
        <div role="tablist" className="mt-[5px] flex h-5 items-end gap-0.5 pl-[3px]">
          <button role="tab" aria-selected="true" className={`-mb-px flex h-[21px] w-[53px] items-center justify-center border border-b-0 bg-[#eff0f4] ${EDGE}`}>Articole</button>
          {["Parteneri", "Divizii", "Gestiuni"].map((t) => (
            <button key={t} role="tab" aria-selected="false" className="h-[18px] border border-b-0 border-[#6d7079] bg-[linear-gradient(#eeeff1,#cfd1d8_45%,#b9bcc6)] px-1.5 text-[#3c3f48]">{t}</button>
          ))}
        </div>
        <div className={`border p-0.5 ${EDGE}`}>
          <div className="mb-1 flex h-[29px] items-start bg-[#525252]">
            <div className={`flex h-6 items-center gap-1 rounded-l pr-0.5 ${TOOL}`}>
              <Grip />
              <span className="flex items-center gap-1"><IconButton label="Adauga articol"><Plus /></IconButton><Caret className="text-black" /></span>
              <span className="flex items-center gap-1"><IconButton label="Editeaza articol"><Pencil /></IconButton><Caret className="text-black" /></span>
              <IconButton label="Sterge articol"><RedX /></IconButton>
              <Divider />
              <IconButton label="Informatii articol"><BoxInfo /></IconButton>
              <IconButton label="Fisa articol"><BoxDoc /></IconButton>
              <Divider />
              <ToolText caret>Import</ToolText>
              <ToolText caret>Recalculeaza liste derivate</ToolText>
            </div>
          </div>
          <section className={`border ${EDGE}`}>
            <Fold title="Filtru articole" className="h-5 border-b" />
            <div className="flex h-[26px] items-center gap-1 pl-0.5 whitespace-nowrap">
              <label htmlFor={f + "n"} className="w-[47px]">Denumire</label>
              <div className="flex h-[22px] w-[155px] items-center border border-[#7d7f87] bg-white pr-1">
                <input id={f + "n"} className="h-full min-w-0 flex-1 bg-transparent px-1 outline-none" />
                <button aria-label="Cauta"><Magnifier /></button>
              </div>
              <label htmlFor={f + "c"} className="w-[51px]">Clasificare</label>
              <Combo id={f + "c"} value="CRICKET" className="w-40" />
              <label htmlFor={f + "t"}>Tip</label>
              <Combo id={f + "t"} value="Activ, Stocabil" className="w-[100px]" />
              <label htmlFor={f + "o"}>Producator</label>
              <Combo id={f + "o"} value="<fara valoare>" clearable className="w-[173px]" />
              <label htmlFor={f + "l"}>Lista preturi comparativa</label>
              <Combo id={f + "l"} value="Lista Pret Achiziti..." clearable className="w-[130px]" />
            </div>
          </section>
          <ArticleGrid />
          <section className={`mt-1.5 border pb-0.5 ${EDGE}`}>
            <Fold title="Informatii articol - CRI - DISPLAY BOOSTER (6700353)" down className="h-5 border-b" />
          </section>
        </div>
      </div>
      <div className="h-[29px] border-t-8 border-[#41424d] bg-[#3a3a3a] px-1">
        <div className="h-3 w-[50px] bg-[linear-gradient(#ededed,#cfcfcf_50%,#e2e2e2)]" />
      </div>
    </section>
  );
}

/* ---------- import window ---------- */

function ImportWindow() {
  return (
    <section className="absolute top-[525px] left-[770px] flex h-[396px] w-[653px] flex-col border border-[#838388] bg-[#9d9da2] px-[3px] pb-[3px]">
      <header className={`-mx-[3px] flex h-7 shrink-0 items-center gap-1 pr-2 pl-1 text-xs text-[#d5d5db] ${TITLE}`}>
        <CubesLogo />
        <h1 className="flex-1">Import lista preturi - Lista Pret Vanzare</h1>
        <WindowButtons />
      </header>
      <div className={`flex min-h-0 flex-1 flex-col border bg-[#eff0f4] ${EDGE}`}>
        <div className="mx-px mt-px flex flex-1 flex-col border border-b-0 border-[#8f9198]">
          <p className="flex h-[35px] items-center pt-px pl-[5px] text-[#6b6d74]">Trage o coloană aici ptr. a grupa pe acea coloană</p>
          <div className="flex-1 bg-white">
            <table className="w-full table-fixed border-separate border-spacing-0">
              <colgroup>
                <col className="w-[17px]" />
                <col className="w-[155px]" />
                <col className="w-[155px]" />
                <col className="w-[155px]" />
                <col />
              </colgroup>
              <thead>
                <tr className="h-[23px]">
                  {["", "Cod Articol", "Limita inferioara", "Limita superioara", "Discount"].map((t) => (
                    <th key={t} className={`border-y border-r p-0 pl-1 text-left font-normal first:border-l ${EDGE} ${HEAD}`}>{t}</th>
                  ))}
                </tr>
              </thead>
            </table>
          </div>
        </div>
        <footer className={`flex h-[41px] items-center gap-[34px] border-t pt-1 pl-2.5 ${EDGE}`}>
          <a href="#" className="text-[#0d0da8] underline">Setari</a>
          <a href="#" className="text-[#0d0da8] underline">Incarca fisier</a>
        </footer>
      </div>
    </section>
  );
}

/* ---------- import profile dialog ---------- */

function ScrollArea({ id, value, className }: { id: string; value: string; className: string }) {
  return (
    <div className={`flex border border-[#85878f] bg-white p-0.5 ${className}`}>
      <textarea id={id} defaultValue={value} className="min-w-0 flex-1 resize-none overflow-hidden bg-transparent pl-px leading-[14px] outline-none" />
      <div className="flex w-4 shrink-0 flex-col items-center justify-between bg-[#efeff2] py-1">
        <svg width="9" height="6" viewBox="0 0 9 6" aria-hidden="true"><path d="M0 6H9L4.500 0Z" fill="#a3a6bd" /></svg>
        <svg width="9" height="6" viewBox="0 0 9 6" aria-hidden="true"><path d="M0 0H9L4.500 6Z" fill="#a3a6bd" /></svg>
      </div>
    </div>
  );
}

function ProfileDialog() {
  const f = useId();
  return (
    <section role="dialog" aria-labelledby={f + "h"} className="absolute top-[596px] right-0 left-[1001px] border-t border-l border-[#4a86cf] bg-[#6aaaf7] pr-[3px] pl-[7px]">
      <header className="flex h-[30px] items-start">
        <span className="pt-1.5"><CubesLogo /></span>
        <h1 id={f + "h"} className="flex-1 pt-1.5 pl-20 text-center font-['Open_Sans','Noto_Sans',sans-serif] text-sm leading-5 text-[#1c3656]">Configurare profil import</h1>
        <div className="flex shrink-0 items-center">
          <button aria-label="Minimizare" className="grid h-5 w-6 place-items-center"><span className="mt-1 h-0.5 w-2 bg-[#16304f]" /></button>
          <button aria-label="Maximizare" className="grid h-5 w-7 place-items-center"><span className="h-2 w-2.5 border border-t-2 border-[#3f6da8]" /></button>
          <button aria-label="Inchidere" className="grid h-5 w-[45px] place-items-center bg-[#c9504e] text-white"><Cross s={8} /></button>
        </div>
      </header>
      <div className={`flex flex-col border border-b-0 bg-[#eff0f4] pt-[17px] pr-[18px] pb-8 pl-7 ${EDGE}`}>
        <div className="grid grid-cols-[80px_1fr] items-center">
          <span>Nume</span>
          <strong className="text-[13px] leading-5">Import prices list- Lista Pret Vanzare</strong>
        </div>
        <div className={`mt-px border px-1 pb-1 ${EDGE}`}>
          <div className="flex h-[27px] items-center"><Check label="Excel" checked reverse /></div>
          <div className={`h-[73px] border pt-[11px] pr-[11px] pl-2.5 ${EDGE}`}>
            <div className="flex items-center">
              <label htmlFor={f + "f"} className="w-[75px] shrink-0">Fisier</label>
              <div className="flex h-5 flex-1 items-center border border-[#7d7f87] bg-white pr-1">
                <input id={f + "f"} className="h-full min-w-0 flex-1 bg-transparent px-1 outline-none" />
                <button aria-label="Alege fisier" className="flex gap-0.5">
                  <span className="size-0.5 bg-[#222]" />
                  <span className="size-0.5 bg-[#222]" />
                  <span className="size-0.5 bg-[#222]" />
                </button>
              </div>
            </div>
            <div className="flex h-8 items-center">
              <span className="w-20 shrink-0">Versiune</span>
              <Radio name="versiune" label="Office 2007" className="w-[145px]" />
              <Radio name="versiune" label="Mai vechi de Office 2007" checked className="w-[228px]" />
              <a href="#" className="mb-2.5 text-[#0d0da8] underline">Deschide</a>
            </div>
          </div>
        </div>
        <div className="mt-[3px] grid grid-cols-[80px_1fr] items-center gap-y-1">
          <label htmlFor={f + "x"}>Conexiune</label>
          <ScrollArea id={f + "x"} value="Driver={Microsoft Excel Driver (*.xls, *.xlsx, *.xlsm, *.xlsb)};" className="h-[70px]" />
          <label htmlFor={f + "c"}>Comanda</label>
          <ScrollArea id={f + "c"} value="SELECT [Cod Articol], [Limita inferioara], [Limita superioara], [Discount]  FROM [Sheet1$]" className="h-[113px]" />
        </div>
        <button className="mt-3.5 -mr-3.5 h-6 w-[75px] self-end rounded-sm border border-[#5b5e68] bg-[#e6e7ea] p-0.5" aria-label="Inchide">
          <span className="block h-full border border-dotted border-black" />
        </button>
      </div>
    </section>
  );
}

export default function App() {
  return (
    <div className="relative flex h-screen flex-col overflow-hidden bg-[#d9dade] font-['DejaVu_Sans_Condensed','Noto_Sans',sans-serif] text-[11px] leading-4 text-black">
      <header className={`flex h-[23px] shrink-0 items-center gap-1 pl-0.5 text-xs text-[#dcdce1] ${TITLE}`}>
        <SeniorLogo />
        <h1 className="flex-1">SeniorERP - demo_new</h1>
        <div className="-mr-1 flex gap-2.5 text-[#5e5f66]">
          <button aria-label="Minimizare" className="grid size-[9px] items-end"><span className="h-0.5 w-2 bg-current" /></button>
          <button aria-label="Restaurare">
            <svg width="9" height="9" viewBox="0 0 9 9" aria-hidden="true"><path d="M.5 3H6.500V8H.5ZM2.500 3V1H8.500V6H6.500" fill="none" stroke="currentColor" strokeWidth="1.200" /></svg>
          </button>
          <button aria-label="Inchidere"><Cross /></button>
        </div>
      </header>
      <div className="flex min-h-0 flex-1">
        <Sidebar />
        <div className="grid w-[5px] shrink-0 place-items-center bg-[#d9dade]">
          <span className="h-[18px] border-l-2 border-dotted border-[#888]" />
        </div>
        <PricePage />
      </div>
      <PriceWindow />
      <ImportWindow />
      <ProfileDialog />
    </div>
  );
}
